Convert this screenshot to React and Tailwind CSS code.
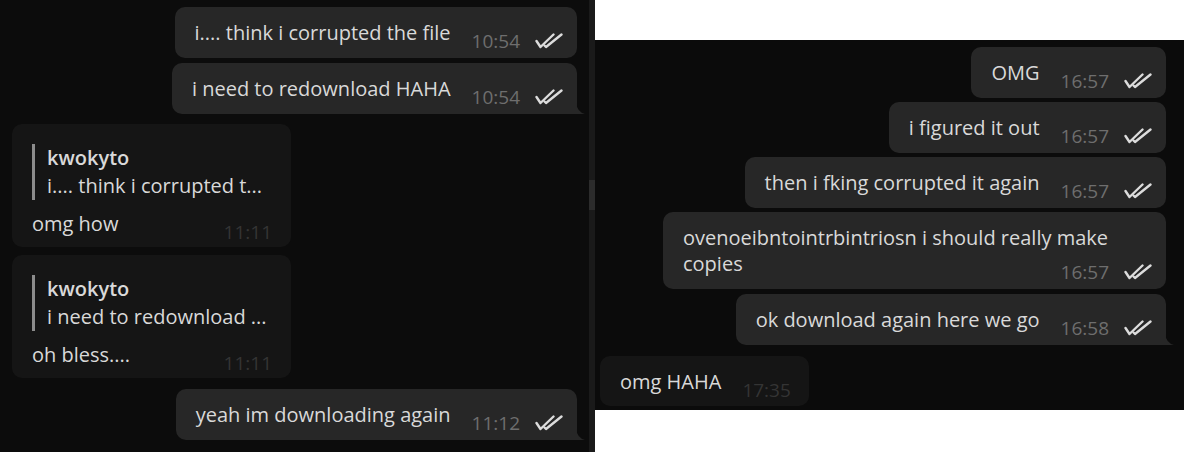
import React from 'react'

function Checks() {
  return (
    <svg
      width="28"
      height="16"
      viewBox="0 0 28 16"
      fill="none"
      stroke="#dcdcdc"
      strokeWidth="2.4"
      strokeLinecap="round"
      strokeLinejoin="round"
      className="ml-[15px] mb-[2px] shrink-0"
    >
      <path d="M1.5 8 L5.5 14 L18.5 1.5" />
      <path d="M9.5 12.5 L11 14 L26.5 1.5" />
    </svg>
  )
}

function Meta({ time, read, dim }) {
  return (
    <div className="flex items-end shrink-0 ml-[21px]">
      <span className={`text-[19px] leading-[20px] ${dim ? 'text-[#343434]' : 'text-[#6e6e6e]'}`}>{time}</span>
      {read && <Checks />}
    </div>
  )
}

function Tail() {
  return (
    <svg width="9" height="12" viewBox="0 0 9 12" className="absolute bottom-0 -right-[8px]">
      <path d="M0 0 Q1 10 9 12 L0 12 Z" fill="#272727" />
    </svg>
  )
}

function Out({ text, time, tail }) {
  return (
    <div className={`relative flex items-end bg-[#272727] rounded-[10px] ${tail ? 'rounded-br-none' : ''} pl-5 pr-[14px] pt-[13px] pb-[7px]`}>
      <span className="text-[20px] leading-[26px] text-[#d9d9d9] mb-[5px] whitespace-nowrap">{text}</span>
      <Meta time={time} read />
      {tail && <Tail />}
    </div>
  )
}

function Reply({ quote, text, time }) {
  return (
    <div className="w-[279px] bg-[#151515] rounded-[10px] pl-5 pr-[19px] pt-5 pb-[5px]">
      <div className="flex gap-3">
        <div className="w-[3px] bg-[#8c8c8c]" />
        <div className="text-[20px] leading-[28px] text-[#d9d9d9] whitespace-nowrap">
          <p className="font-semibold">kwokyto</p>
          <p>{quote}</p>
        </div>
      </div>
      <div className="flex items-end justify-between mt-[11px]">
        <span className="text-[20px] leading-[26px] text-[#d9d9d9] mb-[5px]">{text}</span>
        <span className="text-[19px] leading-[20px] text-[#343434]">{time}</span>
      </div>
    </div>
  )
}

export default function App() {
  return (
    <div className="flex w-[1184px] h-[452px] bg-white font-['Open_Sans',sans-serif]">
      {/* left chat */}
      <div className="w-[589px] h-full bg-[#0c0c0c] flex flex-col pt-[7px] px-3">
        <div className="flex flex-col items-end gap-[5px]">
          <Out text="i.... think i corrupted the file" time="10:54" />
          <Out text="i need to redownload HAHA" time="10:54" tail />
        </div>
        <div className="flex flex-col items-start gap-2 mt-[10px]">
          <Reply quote="i.... think i corrupted t..." text="omg how" time="11:11" />
          <Reply quote="i need to redownload ..." text="oh bless...." time="11:11" />
        </div>
        <div className="flex flex-col items-end mt-[11px]">
          <Out text="yeah im downloading again" time="11:12" tail />
        </div>
      </div>

      {/* scrollbar */}
      <div className="w-[6px] h-full bg-[#1a1a1a] pt-[180px]">
        <div className="h-[30px] bg-[#2c2c2c]" />
      </div>

      {/* right chat */}
      <div className="flex-1 flex flex-col">
        <div className="h-[40px] bg-white" />
        <div className="h-[370px] bg-[#0b0b0b] flex flex-col pt-[7px] pl-[5px] pr-[18px]">
          <div className="flex flex-col items-end gap-1">
            <Out text="OMG" time="16:57" />
            <Out text="i figured it out" time="16:57" />
            <Out text="then i fking corrupted it again" time="16:57" />
            <div className="w-[503px] flex flex-col bg-[#272727] rounded-[10px] pl-5 pr-[14px] pt-[13px] pb-[7px]">
              <span className="text-[20px] leading-[26px] text-[#d9d9d9] whitespace-nowrap">
                ovenoeibntointrbintriosn i should really make
              </span>
              <div className="flex items-end justify-between">
                <span className="text-[20px] leading-[26px] text-[#d9d9d9] mb-[5px]">copies</span>
                <Meta time="16:57" read />
              </div>
            </div>
            <div className="mt-[1px]">
              <Out text="ok download again here we go" time="16:58" tail />
            </div>
          </div>
          <div className="flex mt-[11px]">
            <div className="flex items-end bg-[#151515] rounded-[10px] pl-5 pr-[18px] pt-[13px] pb-[6px]">
              <span className="text-[20px] leading-[26px] text-[#d9d9d9] mb-[5px]">omg HAHA</span>
              <Meta time="17:35" dim />
            </div>
          </div>
        </div>
        <div className="flex-1 bg-white" />
      </div>
    </div>
  )
}
